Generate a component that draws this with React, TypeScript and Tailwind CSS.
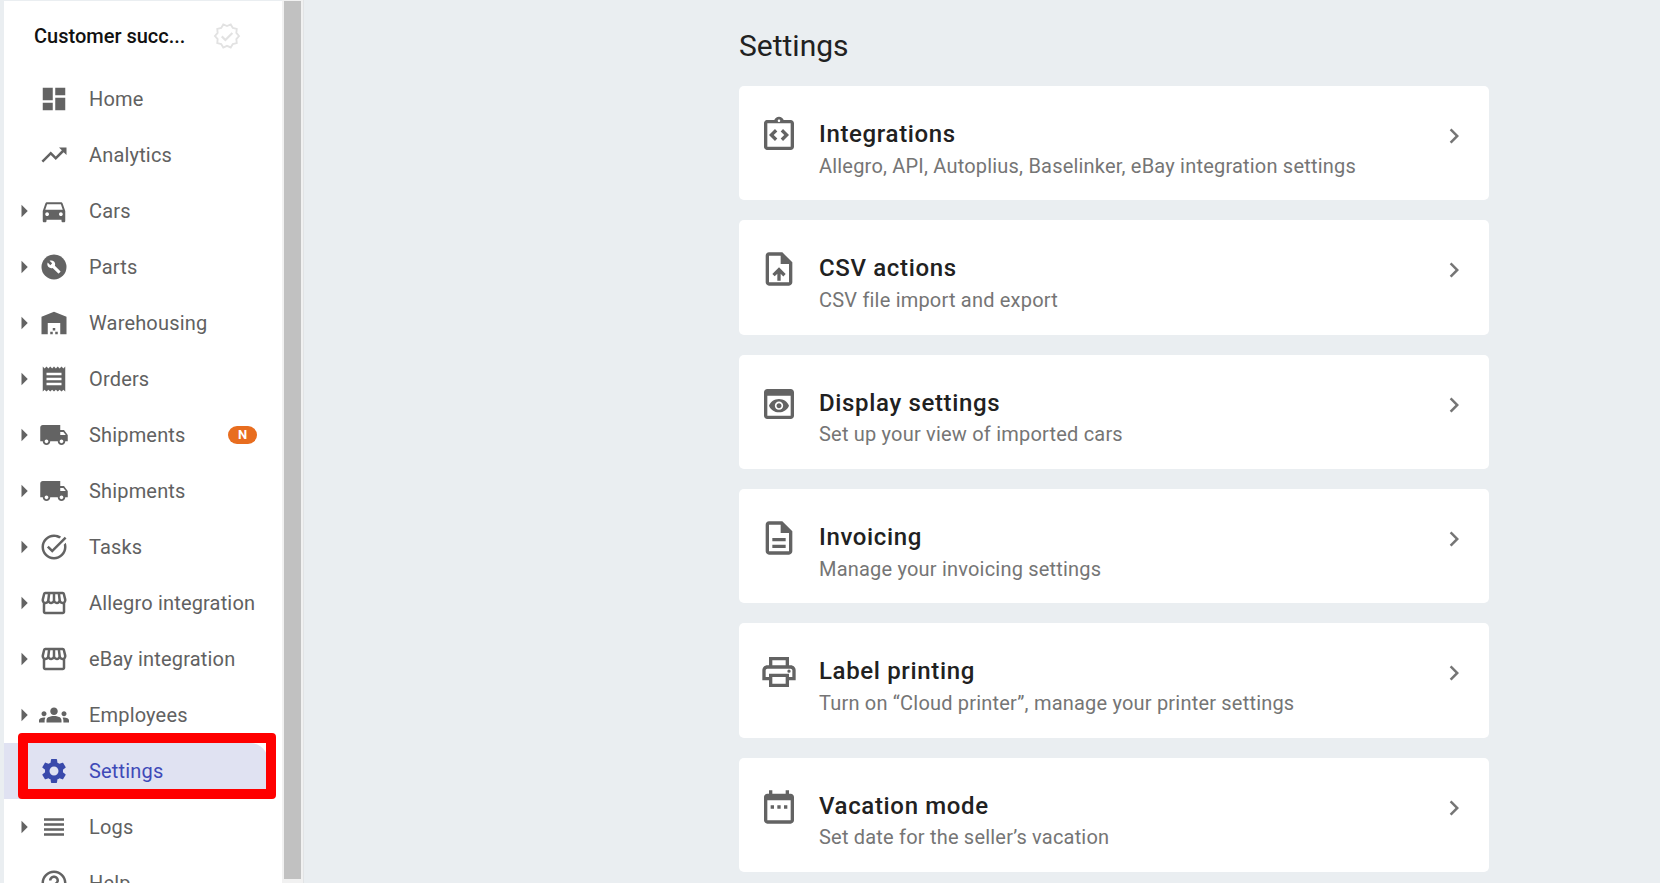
const P = ({ d, s = 30, c = "#636363" }: { d: string; s?: number; c?: string }) => (
  <svg viewBox="0 0 24 24" width={s} height={s} fill={c} className="shrink-0"><path d={d} /></svg>
);
const Shipping = "M20 8h-3V4H3c-1.1 0-2 .9-2 2v11h2c0 1.66 1.34 3 3 3s3-1.34 3-3h6c0 1.66 1.34 3 3 3s3-1.34 3-3h2v-5l-3-4zM6 18.5c-.83 0-1.5-.67-1.5-1.5s.67-1.5 1.5-1.5 1.5.67 1.5 1.5-.67 1.5-1.5 1.5zm13.5-9l1.96 2.5H17V9.5h2.5zm-1.5 9c-.83 0-1.5-.67-1.5-1.5s.67-1.5 1.5-1.5 1.5.67 1.5 1.5-.67 1.5-1.5 1.5z";
const Store = "M21.9 8.89l-1.05-4.37c-.22-.9-1-1.52-1.91-1.52H5.05c-.9 0-1.69.63-1.9 1.52L2.1 8.89c-.24 1.02-.02 2.06.62 2.88.08.11.19.19.28.29V19c0 1.1.9 2 2 2h14c1.1 0 2-.9 2-2v-6.94c.09-.09.2-.18.28-.28.64-.82.87-1.87.62-2.89zm-2.99-3.9l1.05 4.37c.1.42.01.84-.25 1.17-.14.18-.44.47-.94.47-.61 0-1.14-.49-1.21-1.14L16.98 5l1.93-.01zM13 5h1.96l.54 4.52c.05.39-.07.78-.33 1.07-.22.26-.54.41-.95.41-.67 0-1.22-.59-1.22-1.31V5zM8.49 9.52L9.04 5H11v4.69c0 .72-.55 1.31-1.29 1.31-.34 0-.65-.15-.89-.41-.25-.29-.37-.68-.33-1.07zm-4.45-.16L5.05 5h1.97l-.58 4.86c-.08.65-.6 1.14-1.21 1.14-.49 0-.8-.29-.93-.47-.27-.32-.36-.75-.26-1.17zM5 19v-6.03c.08.01.15.03.23.03.87 0 1.66-.36 2.24-.95.6.6 1.4.95 2.31.95.87 0 1.65-.36 2.23-.93.59.57 1.39.93 2.29.93.84 0 1.64-.35 2.24-.95.58.59 1.37.95 2.24.95.08 0 .15-.02.23-.03V19H5z";
const Parts = () => (
  <svg viewBox="0 0 24 24" width={30} height={30} className="shrink-0">
    <circle cx="12" cy="12" r="10" fill="#636363" />
    <path fill="#fff" transform="translate(6.2 6.2) scale(.48)" d="M22.7 19l-9.1-9.1c.9-2.3.4-5-1.5-6.9-2-2-5-2.4-7.4-1.3L9 6 6 9 1.6 4.7C.4 7.1.9 10.1 2.9 12.1c1.9 1.9 4.6 2.4 6.9 1.5l9.1 9.1c.4.4 1 .4 1.4 0l2.3-2.3c.5-.4.5-1.1.1-1.4z" />
  </svg>
);
const nav: { label: string; d?: string; arrow: boolean; badge?: boolean; custom?: boolean }[] = [
  { label: "Home", arrow: false, d: "M3 13h8V3H3v10zm0 8h8v-6H3v6zm10 0h8V11h-8v10zm0-18v6h8V3h-8z" },
  { label: "Analytics", arrow: false, d: "M16 6l2.29 2.29-4.88 4.88-4-4L2 16.59 3.41 18l6-6 4 4 6.3-6.29L22 12V6z" },
  { label: "Cars", arrow: true, d: "M18.92 6.01C18.72 5.42 18.16 5 17.5 5h-11c-.66 0-1.21.42-1.42 1.01L3 12v8c0 .55.45 1 1 1h1c.55 0 1-.45 1-1v-1h12v1c0 .55.45 1 1 1h1c.55 0 1-.45 1-1v-8l-2.08-5.99zM6.5 16c-.83 0-1.5-.67-1.5-1.5S5.67 13 6.5 13s1.5.67 1.5 1.5S7.33 16 6.5 16zm11 0c-.83 0-1.5-.67-1.5-1.5s.67-1.5 1.5-1.5 1.5.67 1.5 1.5-.67 1.5-1.5 1.5zM5 11l1.5-4.5h11L19 11H5z" },
  { label: "Parts", arrow: true, custom: true },
  { label: "Warehousing", arrow: true, d: "M22 21V7L12 3 2 7v14h5v-9h10v9h5zm-11-2H9v2h2v-2zm2-3h-2v2h2v-2zm2 3h-2v2h2v-2z" },
  { label: "Orders", arrow: true, d: "M18 17H6v-2h12v2zm0-4H6v-2h12v2zm0-4H6V7h12v2zM3 22l1.5-1.5L6 22l1.5-1.5L9 22l1.5-1.5L12 22l1.5-1.5L15 22l1.5-1.5L18 22l1.5-1.5L21 22V2l-1.5 1.5L18 2l-1.5 1.5L15 2l-1.5 1.5L12 2l-1.5 1.5L9 2 7.5 3.5 6 2 4.5 3.5 3 2v20z" },
  { label: "Shipments", arrow: true, badge: true, d: Shipping },
  { label: "Shipments", arrow: true, d: Shipping },
  { label: "Tasks", arrow: true, d: "M22 5.18 10.59 16.6l-4.24-4.24 1.41-1.41 2.83 2.83 10-10L22 5.18zm-2.21 5.04c.13.57.21 1.17.21 1.78 0 4.42-3.58 8-8 8s-8-3.58-8-8 3.58-8 8-8c1.58 0 3.04.46 4.28 1.25l1.44-1.44C16.1 2.67 14.13 2 12 2 6.48 2 2 6.48 2 12s4.48 10 10 10 10-4.48 10-10c0-1.19-.22-2.33-.6-3.39l-1.61 1.61z" },
  { label: "Allegro integration", arrow: true, d: Store },
  { label: "eBay integration", arrow: true, d: Store },
  { label: "Employees", arrow: true, d: "M12 12.75c1.63 0 3.07.39 4.24.9 1.08.48 1.76 1.56 1.76 2.73V18H6v-1.61c0-1.18.68-2.26 1.76-2.73 1.17-.52 2.61-.91 4.24-.91zM4 13c1.1 0 2-.9 2-2s-.9-2-2-2-2 .9-2 2 .9 2 2 2zm1.13 1.1c-.37-.06-.74-.1-1.13-.1-.99 0-1.93.21-2.78.58C.48 14.9 0 15.62 0 16.43V18h4.5v-1.61c0-.83.23-1.61.63-2.29zM20 13c1.1 0 2-.9 2-2s-.9-2-2-2-2 .9-2 2 .9 2 2 2zm4 3.43c0-.81-.48-1.53-1.22-1.85-.85-.37-1.79-.58-2.78-.58-.39 0-.76.04-1.13.1.4.68.63 1.46.63 2.29V18H24v-1.57zM12 6c1.66 0 3 1.34 3 3s-1.34 3-3 3-3-1.34-3-3 1.34-3 3-3z" },
];
const Settings = "M19.14 12.94c.04-.3.06-.61.06-.94 0-.32-.02-.64-.07-.94l2.03-1.58c.18-.14.23-.41.12-.61l-1.92-3.32c-.12-.22-.37-.29-.59-.22l-2.39.96c-.5-.38-1.03-.7-1.62-.94l-.36-2.54c-.04-.24-.24-.41-.48-.41h-3.84c-.24 0-.43.17-.47.41l-.36 2.54c-.59.24-1.13.57-1.62.94l-2.39-.96c-.22-.08-.47 0-.59.22L2.74 8.87c-.12.21-.08.47.12.61l2.03 1.58c-.05.3-.09.63-.09.94s.02.64.07.94l-2.03 1.58c-.18.14-.23.41-.12.61l1.92 3.32c.12.22.37.29.59.22l2.39-.96c.5.38 1.03.7 1.62.94l.36 2.54c.05.24.24.41.48.41h3.84c.24 0 .44-.17.47-.41l.36-2.54c.59-.24 1.13-.56 1.62-.94l2.39.96c.22.08.47 0 .59-.22l1.92-3.32c.12-.22.07-.47-.12-.61l-2.01-1.58zM12 15.6c-1.98 0-3.6-1.62-3.6-3.6s1.62-3.6 3.6-3.6 3.6 1.62 3.6 3.6-1.62 3.6-3.6 3.6z";
const Row = ({ label, d, arrow, badge, custom }: { label: string; d?: string; arrow: boolean; badge?: boolean; custom?: boolean }) => (
  <div className="flex h-14 shrink-0 items-center pl-[5px]">
    <div className="w-[30px] shrink-0">{arrow && <P d="M10 17l5-5-5-5v10z" />}</div>
    {custom ? <Parts /> : <P d={d!} />}
    <span className="ml-5 flex-1 text-[20px] tracking-[0.17px] text-[#616161]">{label}</span>
    {badge && <span className="mr-[25px] flex h-[18px] w-[29px] items-center justify-center rounded-full bg-[#e86d1f] text-[13px] font-bold text-white">N</span>}
  </div>
);
const cards = [
  { t: "Integrations", s: "Allegro, API, Autoplius, Baselinker, eBay integration settings", d: "M11 14.17 8.83 12 11 9.83 9.59 8.41 6 12l3.59 3.59zM14.41 15.59 18 12l-3.59-3.59L13 9.83 15.17 12 13 14.17zM19 3h-4.18C14.4 1.84 13.3 1 12 1s-2.4.84-2.82 2H5c-.14 0-.27.01-.4.04-.39.08-.74.28-1.01.55-.18.18-.33.4-.43.64-.1.23-.16.49-.16.77v14c0 .27.06.54.16.78s.25.45.43.64c.27.27.62.47 1.01.55.13.02.26.03.4.03h14c1.1 0 2-.9 2-2V5c0-1.1-.9-2-2-2zm-7-.25c.41 0 .75.34.75.75s-.34.75-.75.75-.75-.34-.75-.75.34-.75.75-.75zM19 19H5V5h14v14z" },
  { t: "CSV actions", s: "CSV file import and export", d: "M14 2H6c-1.1 0-1.99.9-1.99 2L4 20c0 1.1.89 2 1.99 2H18c1.1 0 2-.9 2-2V8l-6-6zm4 18H6V4h7v5h5v11zM8 15.01l1.41 1.41L11 14.84V19h2v-4.16l1.59 1.59L16 15.01 12.01 11 8 15.01z" },
  { t: "Display settings", s: "Set up your view of imported cars", d: "M19 3H5c-1.11 0-2 .9-2 2v14c0 1.1.89 2 2 2h14c1.1 0 2-.9 2-2V5c0-1.1-.89-2-2-2zm0 16H5V7h14v12zm-5.5-6c0 .83-.67 1.5-1.5 1.5s-1.5-.67-1.5-1.5.67-1.5 1.5-1.5 1.5.67 1.5 1.5zM12 9c-2.73 0-5.06 1.66-6 4 .94 2.34 3.27 4 6 4s5.06-1.66 6-4c-.94-2.34-3.27-4-6-4zm0 6.5c-1.38 0-2.5-1.12-2.5-2.5s1.12-2.5 2.5-2.5 2.5 1.12 2.5 2.5-1.12 2.5-2.5 2.5z" },
  { t: "Invoicing", s: "Manage your invoicing settings", d: "M8 16h8v2H8zm0-4h8v2H8zm6-10H6c-1.1 0-2 .9-2 2v16c0 1.1.89 2 1.99 2H18c1.1 0 2-.9 2-2V8l-6-6zm4 18H6V4h7v5h5v11z" },
  { t: "Label printing", s: "Turn on “Cloud printer”, manage your printer settings", d: "M19 8h-1V3H6v5H5c-1.66 0-3 1.34-3 3v6h4v4h12v-4h4v-6c0-1.66-1.34-3-3-3zM8 5h8v3H8V5zm8 12v2H8v-4h8v2zm2-2v-2H6v2H4v-4c0-.55.45-1 1-1h14c.55 0 1 .45 1 1v4h-2zM18 10.5a1 1 0 1 1 0 2 1 1 0 0 1 0-2z" },
  { t: "Vacation mode", s: "Set date for the seller’s vacation", d: "M7 11h2v2H7zm4 0h2v2h-2zm4 0h2v2h-2zM19 4h-1V2h-2v2H8V2H6v2H5c-1.1 0-2 .9-2 2v14c0 1.1.9 2 2 2h14c1.1 0 2-.9 2-2V6c0-1.1-.9-2-2-2zm0 16H5V8h14v12z" },
];
export default function App() {
  return (
    <div className="flex h-[883px] overflow-hidden bg-[#eaeef1] font-['Roboto',sans-serif]">
      <aside className="ml-1 mt-px flex w-[278px] shrink-0 flex-col overflow-hidden bg-white">
        <div className="flex h-[70px] shrink-0 items-center pl-[30px]">
          <span className="w-[180px] text-[20px] font-medium leading-none text-[#111]">Customer succ...</span>
          <svg viewBox="0 0 24 24" width={30} height={30} fill="none" stroke="#e2e2e2" strokeWidth="1.7" className="ml-[-2px]">
            <path d="M23 12l-2.44-2.79.34-3.69-3.61-.82-1.89-3.2L12 2.96 8.6 1.5 6.71 4.69 3.1 5.5l.34 3.7L1 12l2.44 2.79-.34 3.7 3.61.82L8.6 22.5l3.4-1.47 3.4 1.46 1.89-3.19 3.61-.82-.34-3.69L23 12z" transform="translate(1.5 1.5) scale(.875)" />
            <path d="M7.8 12.3l2.9 2.9 5.6-5.6" />
          </svg>
        </div>
        {nav.map((n, i) => <Row key={i} {...n} />)}
        <div className="relative flex h-14 w-[264px] shrink-0 items-center rounded-tr-[18px] bg-[#e0e2f2] pl-[35px]">
          <P d={Settings} c="#3949ab" />
          <span className="ml-5 text-[20px] tracking-[0.17px] text-[#3f4ab8]">Settings</span>
          <div className="absolute left-[14px] top-[-10px] h-[66px] w-[258px] rounded-[4px] border-10 border-[#ff0000]" />
        </div>
        <Row label="Logs" arrow d="M4 15h16v-2H4v2zm0 4h16v-2H4v2zm0-8h16V9H4v2zm0-6v2h16V5H4z" />
        <Row label="Help" arrow={false} d="M11 18h2v-2h-2v2zm1-16C6.48 2 2 6.48 2 12s4.48 10 10 10 10-4.48 10-10S17.52 2 12 2zm0 18c-4.41 0-8-3.59-8-8s3.59-8 8-8 8 3.59 8 8-3.59 8-8 8zm0-14c-2.21 0-4 1.79-4 4h2c0-1.1.9-2 2-2s2 .9 2 2c0 2-3 1.75-3 5h2c0-2.25 3-2.5 3-5 0-2.21-1.79-4-4-4z" />
      </aside>
      <div className="w-[22px] shrink-0 border-r border-[#e2e4e6] bg-[#f1f1f1] pl-[2px] pt-px">
        <div className="h-[878px] w-[17px] bg-[#c1c1c1]" />
      </div>
      <main className="flex-1 pl-[435px]">
        <h1 className="flex h-[86px] items-center pt-[5px] text-[30px] font-normal leading-none text-[#212121]">Settings</h1>
        <div className="flex w-[750px] flex-col gap-5">
          {cards.map((c) => (
            <div key={c.t} className="flex h-[114.33px] items-start rounded-[5px] bg-white px-5 pt-[29px]">
              <P d={c.d} s={40} />
              <div className="ml-5 mt-[3px] flex-1">
                <div className="text-[24px] font-medium leading-[32.7px] tracking-[0.65px] text-[#212121]">{c.t}</div>
                <div className="text-[20px] leading-[30px] tracking-[0.2px] text-[#757575]">{c.s}</div>
              </div>
              <div className="mt-[6px]"><P d="M10 6L8.59 7.41 13.17 12l-4.58 4.59L10 18l6-6z" c="#757575" /></div>
            </div>
          ))}
        </div>
      </main>
    </div>
  );
}
